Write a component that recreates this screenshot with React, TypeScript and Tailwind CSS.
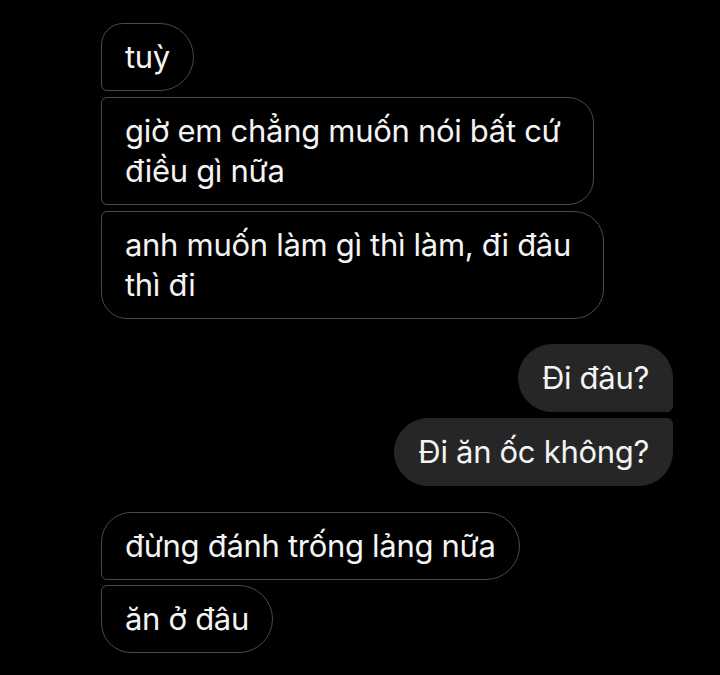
const font = { fontFamily: 'Inter, "Noto Sans", sans-serif' }

function Bubble({
  children,
  corners,
  mine,
  width,
}: {
  children: React.ReactNode
  corners: string
  mine?: boolean
  width?: string
}) {
  return (
    <div
      className={`${corners} ${width ?? 'w-fit'} px-[23px] py-[13px] text-[31px] leading-[40px] tracking-[-0.3px] text-[#f4f4f4] whitespace-nowrap ${
        mine ? 'bg-[#262626] border-[1.5px] border-[#262626]' : 'border-[1.5px] border-[#4a4a4a]'
      }`}
    >
      {children}
    </div>
  )
}

export default function App() {
  return (
    <div className="min-h-[675px] w-[720px] bg-black pt-[23px]" style={font}>
      {/* their messages */}
      <div className="ml-[101px] flex flex-col gap-[6px]">
        <Bubble corners="rounded-tl-[22px] rounded-bl-[6px] rounded-r-[34px]">tuỳ</Bubble>
        <Bubble corners="rounded-l-[6px] rounded-r-[26px]" width="w-[493px]">
          giờ em chẳng muốn nói bất cứ
          <br />
          điều gì nữa
        </Bubble>
        <Bubble corners="rounded-tl-[6px] rounded-bl-[26px] rounded-r-[30px]" width="w-[503px]">
          anh muốn làm gì thì làm, đi đâu
          <br />
          thì đi
        </Bubble>
      </div>

      {/* my messages */}
      <div className="mr-[47px] mt-[25px] flex flex-col items-end gap-[6px]">
        <Bubble mine corners="rounded-l-[34px] rounded-tr-[34px] rounded-br-[6px]">Đi đâu?</Bubble>
        <Bubble mine corners="rounded-l-[34px] rounded-tr-[6px] rounded-br-[34px]">Đi ăn ốc không?</Bubble>
      </div>

      {/* their messages */}
      <div className="ml-[101px] mt-[26px] flex flex-col gap-[5px]">
        <Bubble corners="rounded-tl-[30px] rounded-bl-[6px] rounded-r-[34px]">đừng đánh trống lảng nữa</Bubble>
        <Bubble corners="rounded-tl-[6px] rounded-bl-[30px] rounded-r-[34px]">ăn ở đâu</Bubble>
      </div>
    </div>
  )
}
